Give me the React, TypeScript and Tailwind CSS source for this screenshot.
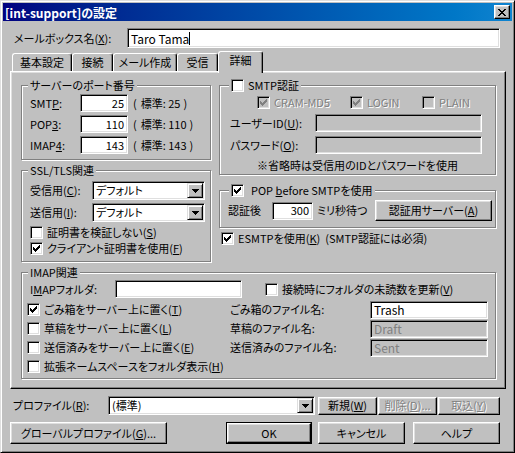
import React from "react";

const FONT =
  "font-['Noto_Sans_CJK_JP','Noto_Sans_CJK_SC',sans-serif] [font-feature-settings:'palt']";
const RAISED =
  "border border-t-white border-l-white border-r-black border-b-black shadow-[inset_-1px_-1px_0_#808080,inset_1px_1px_0_#dfdfdf]";
const SUNKEN =
  "border border-t-[#808080] border-l-[#808080] border-r-white border-b-white shadow-[inset_1px_1px_0_#000,inset_-1px_-1px_0_#dfdfdf]";
const ETCHED = "border border-[#808080] shadow-[inset_1px_1px_0_#fff,1px_1px_0_#fff]";
const DIS = "text-[#808080] [text-shadow:1px_1px_0_#fff]";

function U({ c }: { c: string }) {
  return <span className="underline decoration-1 underline-offset-[1px]">{c}</span>;
}

const CHECK_PATH =
  "M6 0h1v1h-1zM5 1h2v1h-2zM0 2h1v1h-1zM4 2h3v1h-3zM0 3h2v1h-2zM3 3h3v1h-3zM0 4h5v1h-5zM1 5h3v1h-3zM2 6h1v1h-1z";

function Check({ on, dis }: { on?: boolean; dis?: boolean }) {
  return (
    <span
      className={`${SUNKEN} ${dis ? "bg-[#c0c0c0]" : "bg-white"} w-[13px] h-[13px] shrink-0 flex items-center justify-center`}
    >
      {on && (
        <svg width="7" height="7" viewBox="0 0 7 7" shapeRendering="crispEdges">
          <path d={CHECK_PATH} fill={dis ? "#808080" : "#000"} />
        </svg>
      )}
    </span>
  );
}

function Field({
  className = "",
  children,
  dis,
}: {
  className?: string;
  children?: React.ReactNode;
  dis?: boolean;
}) {
  return (
    <div
      className={`${SUNKEN} ${dis ? "bg-[#c0c0c0]" : "bg-white"} flex items-center px-[3px] shrink-0 whitespace-nowrap ${className}`}
    >
      {children}
    </div>
  );
}

function DropBtn() {
  return (
    <div className="w-[16px] h-full shrink-0 bg-[#c0c0c0] border border-t-[#dfdfdf] border-l-[#dfdfdf] border-r-black border-b-black shadow-[inset_1px_1px_0_#fff,inset_-1px_-1px_0_#808080] flex items-center justify-center">
      <svg width="7" height="4" viewBox="0 0 7 4" shapeRendering="crispEdges">
        <path d="M0 0h7v1h-7zM1 1h5v1h-5zM2 2h3v1h-3zM3 3h1v1h-1z" fill="#000" />
      </svg>
    </div>
  );
}

function Combo({ className = "", value }: { className?: string; value: string }) {
  return (
    <div className={`${SUNKEN} bg-white p-px flex shrink-0 ${className}`}>
      <span className="flex-1 flex items-center pl-[2px] whitespace-nowrap">{value}</span>
      <DropBtn />
    </div>
  );
}

function Btn({
  className = "",
  children,
  dis,
}: {
  className?: string;
  children?: React.ReactNode;
  dis?: boolean;
}) {
  return (
    <div
      className={`${RAISED} bg-[#c0c0c0] flex items-center justify-center shrink-0 whitespace-nowrap ${dis ? DIS : ""} ${className}`}
    >
      {children}
    </div>
  );
}

function Group({
  legend,
  legendCls = "",
  className = "",
  children,
}: {
  legend: React.ReactNode;
  legendCls?: string;
  className?: string;
  children?: React.ReactNode;
}) {
  return (
    <fieldset className={`${ETCHED} m-0 p-0 min-w-0 shrink-0 ${className}`}>
      <legend className={`bg-[#c0c0c0] px-[2px] leading-[13px] h-[13px] whitespace-nowrap ${legendCls}`}>
        {legend}
      </legend>
      {children}
    </fieldset>
  );
}

function CheckRow({
  on,
  dis,
  children,
  className = "",
  gap = "gap-[4px]",
}: {
  on?: boolean;
  dis?: boolean;
  children: React.ReactNode;
  className?: string;
  gap?: string;
}) {
  return (
    <div className={`flex items-center ${gap} whitespace-nowrap ${className}`}>
      <Check on={on} dis={dis} />
      <span className={dis ? DIS : ""}>{children}</span>
    </div>
  );
}

function Tab({ label, sel, w }: { label: string; sel?: boolean; w: string }) {
  if (sel)
    return (
      <div
        className={`${w} h-[22px] -mb-[2px] relative z-10 bg-[#c0c0c0] border-t border-l border-r border-t-white border-l-white border-r-black shadow-[inset_-1px_0_0_#808080] rounded-t-[3px] flex items-center justify-center pb-[4px] whitespace-nowrap`}
      >
        {label}
      </div>
    );
  return (
    <div
      className={`${w} h-[18px] bg-[#c0c0c0] border-t border-l border-r border-t-white border-l-white border-r-black shadow-[inset_-1px_0_0_#808080] rounded-t-[3px] flex items-center justify-center whitespace-nowrap`}
    >
      {label}
    </div>
  );
}

export default function App() {
  return (
    <div
      className={`${FONT} text-[11px] leading-[13px] text-black w-[515px] h-[453px] bg-[#c0c0c0] border border-t-[#dfdfdf] border-l-[#dfdfdf] border-r-black border-b-black shadow-[inset_1px_1px_0_#fff,inset_-1px_-1px_0_#808080] p-[2px] flex flex-col overflow-hidden`}
    >
      {/* Title bar */}
      <div className="h-[18px] shrink-0 bg-linear-to-r from-[#000080] to-[#1084d0] flex items-center pl-[2px] pr-[2px]">
        <span className="text-white font-bold text-[12px] flex-1 whitespace-nowrap">
          [int-support]の設定
        </span>
        <Btn className="w-[16px] h-[14px]">
          <svg width="8" height="7" viewBox="0 0 8 7" shapeRendering="crispEdges">
            <path
              d="M0 0h2v1H0zM6 0h2v1H6zM1 1h2v1H1zM5 1h2v1H5zM2 2h4v1H2zM3 3h2v1H3zM2 4h4v1H2zM1 5h2v1H1zM5 5h2v1H5zM0 6h2v1H0zM6 6h2v1H6z"
              fill="#000"
            />
          </svg>
        </Btn>
      </div>

      {/* Body */}
      <div className="flex-1 flex flex-col pl-[7px] pr-[6px]">
        {/* Mailbox name */}
        <div className="mt-[7px] h-[20px] flex items-center">
          <span className="ml-[4px] w-[113px] whitespace-nowrap">
            メールボックス名(<U c="X" />):
          </span>
          <Field className="w-[373px] h-[20px] text-[12px]">
            <span>Taro Tama</span>
            <span className="w-px h-[13px] bg-black" />
          </Field>
        </div>

        {/* Tabs */}
        <div className="mt-[3px] h-[20px] flex items-end pl-[2px]">
          <Tab label="基本設定" w="w-[60px]" />
          <Tab label="接続" w="w-[41px]" />
          <Tab label="メール作成" w="w-[64px]" />
          <Tab label="受信" w="w-[41px]" />
          <Tab label="詳細" w="w-[45px]" sel />
        </div>

        {/* Panel */}
        <div
          className={`w-[496px] h-[318px] shrink-0 border border-t-white border-l-white border-r-black border-b-black shadow-[inset_-1px_-1px_0_#808080,inset_1px_1px_0_#dfdfdf] pt-[7px] pl-[10px] pr-[9px] flex flex-col`}
        >
          <div className="flex gap-[8px]">
            {/* Left column */}
            <div className="w-[190px] flex flex-col gap-[4px]">
              <Group legend="サーバーのポート番号" legendCls="ml-[6px]" className="h-[81px]">
                <div className="mt-[2px] pl-[8px] flex flex-col gap-[3px]">
                  {[
                    ["SMTP", "P", "25"],
                    ["POP", "3", "110"],
                    ["IMAP", "4", "143"],
                  ].map(([a, b, v]) => (
                    <div key={a} className="h-[18px] flex items-center">
                      <span className="w-[50px] whitespace-nowrap">
                        {a === "SMTP" ? (
                          <>
                            SMT<U c="P" />:
                          </>
                        ) : (
                          <>
                            {a}
                            <U c={b} />:
                          </>
                        )}
                      </span>
                      <Field className="w-[48px] h-[18px] justify-end">{v}</Field>
                      <span className="ml-[5px] whitespace-nowrap">
                        (<span className="ml-[4px]">標準: {v}</span>
                        <span className="ml-[3px]">)</span>
                      </span>
                    </div>
                  ))}
                </div>
              </Group>

              <Group legend="SSL/TLS関連" legendCls="ml-[6px]" className="h-[98px]">
                <div className="mt-[4px] pl-[8px] flex flex-col gap-[3px]">
                  <div className="h-[19px] flex items-center">
                    <span className="w-[62px] whitespace-nowrap">
                      受信用(<U c="C" />):
                    </span>
                    <Combo className="w-[113px] h-[19px]" value="デフォルト" />
                  </div>
                  <div className="h-[19px] flex items-center">
                    <span className="w-[62px] whitespace-nowrap">
                      送信用(<U c="I" />):
                    </span>
                    <Combo className="w-[113px] h-[19px]" value="デフォルト" />
                  </div>
                </div>
                <div className="mt-[2px] pl-[8px] flex flex-col">
                  <CheckRow className="h-[16px]">
                    証明書を検証しない(<U c="S" />)
                  </CheckRow>
                  <CheckRow className="h-[16px]" on>
                    クライアント証明書を使用(<U c="F" />)
                  </CheckRow>
                </div>
              </Group>
            </div>

            {/* Right column */}
            <div className="w-[277px] flex flex-col">
              <Group
                legend={
                  <span className="flex items-center gap-[4px] h-[13px]">
                    <Check />
                    <span>SMTP認証</span>
                  </span>
                }
                legendCls="ml-[9px]"
                className="h-[96px]"
              >
                <div className="mt-[4px] h-[13px] pl-[37px] flex items-center">
                  <CheckRow on dis className="w-[93px]">
                    CRAM-MD5
                  </CheckRow>
                  <CheckRow on dis className="w-[72px]">
                    LOGIN
                  </CheckRow>
                  <CheckRow dis>PLAIN</CheckRow>
                </div>
                <div className="mt-[5px] h-[18px] pl-[10px] flex items-center">
                  <span className="w-[85px] whitespace-nowrap">
                    ユーザーID(<U c="U" />):
                  </span>
                  <Field dis className="w-[167px] h-[18px]" />
                </div>
                <div className="mt-[4px] h-[18px] pl-[10px] flex items-center">
                  <span className="w-[85px] whitespace-nowrap">
                    パスワード(<U c="O" />):
                  </span>
                  <Field dis className="w-[167px] h-[18px]" />
                </div>
                <div className="mt-[5px] h-[13px] text-center whitespace-nowrap">
                  ※省略時は受信用のIDとパスワードを使用
                </div>
              </Group>

              <Group
                legend={
                  <span className="flex items-center gap-[7px] h-[13px]">
                    <Check on />
                    <span>
                      POP <U c="b" />
                      efore SMTPを使用
                    </span>
                  </span>
                }
                legendCls="ml-[9px]"
                className="h-[44px] mt-[9px]"
              >
                <div className="mt-[3px] h-[21px] pl-[8px] pr-[3px] flex items-center">
                  <span className="w-[44px] whitespace-nowrap">認証後</span>
                  <Field className="w-[41px] h-[18px] justify-end">300</Field>
                  <span className="ml-[4px] whitespace-nowrap">ミリ秒待つ</span>
                  <span className="flex-1" />
                  <Btn className="w-[117px] h-[21px]">
                    認証用サーバー(<U c="A" />)
                  </Btn>
                </div>
              </Group>

              <CheckRow on className="mt-[4px] h-[13px] pl-[2px]">
                ESMTPを使用(<U c="K" />)<span className="ml-[5px]">(SMTP認証には必須)</span>
              </CheckRow>
            </div>
          </div>

          {/* IMAP */}
          <Group legend="IMAP関連" legendCls="ml-[6px]" className="h-[113px] mt-[4px]">
            <div className="mt-[1px] h-[18px] pl-[8px] flex items-center">
              <span className="w-[85px] whitespace-nowrap">
                I<U c="M" />
                APフォルダ:
              </span>
              <Field className="w-[127px] h-[18px]" />
              <CheckRow className="ml-[23px]">
                接続時にフォルダの未読数を更新(<U c="V" />)
              </CheckRow>
            </div>
            <div className="mt-[2px] pl-[5px] flex flex-col">
              {[
                { on: true, t: "ごみ箱をサーバー上に置く", k: "T", lab: "ごみ箱のファイル名:", v: "Trash", dis: false },
                { on: false, t: "草稿をサーバー上に置く", k: "L", lab: "草稿のファイル名:", v: "Draft", dis: true },
                { on: false, t: "送信済みをサーバー上に置く", k: "E", lab: "送信済みのファイル名:", v: "Sent", dis: true },
              ].map((r) => (
                <div key={r.k} className="h-[19px] flex items-center">
                  <CheckRow on={r.on} className="w-[203px]">
                    {r.t}(<U c={r.k} />)
                  </CheckRow>
                  <span className="w-[140px] whitespace-nowrap">{r.lab}</span>
                  <Field
                    dis={r.dis}
                    className={`w-[118px] h-[18px] text-[12px] ${r.dis ? "text-[#808080]" : ""}`}
                  >
                    {r.v}
                  </Field>
                </div>
              ))}
              <div className="h-[19px] flex items-center">
                <CheckRow>
                  拡張ネームスペースをフォルダ表示(<U c="H" />)
                </CheckRow>
              </div>
            </div>
          </Group>
        </div>

        {/* Profile row */}
        <div className="mt-[7px] h-[19px] flex items-center">
          <span className="ml-[3px] w-[95px] whitespace-nowrap">
            プロファイル(<U c="R" />):
          </span>
          <Combo className="w-[207px] h-[19px]" value="(標準)" />
          <Btn className="ml-[3px] w-[59px] h-[18px]">
            新規(<U c="W" />)
          </Btn>
          <Btn dis className="ml-[1px] w-[59px] h-[18px]">
            削除(<U c="D" />)...
          </Btn>
          <Btn dis className="ml-[1px] w-[62px] h-[18px]">
            取込(<U c="Y" />)
          </Btn>
        </div>

        {/* Bottom buttons */}
        <div className="mt-[7px] h-[22px] flex items-center">
          <Btn className="w-[157px] h-[22px]">
            グローバルプロファイル(<U c="G" />)...
          </Btn>
          <div className="ml-[59px] w-[86px] h-[22px] border border-black flex">
            <Btn className="flex-1 h-full">OK</Btn>
          </div>
          <Btn className="ml-[6px] w-[87px] h-[22px]">キャンセル</Btn>
          <Btn className="ml-[8px] w-[87px] h-[22px]">ヘルプ</Btn>
        </div>
      </div>
    </div>
  );
}
